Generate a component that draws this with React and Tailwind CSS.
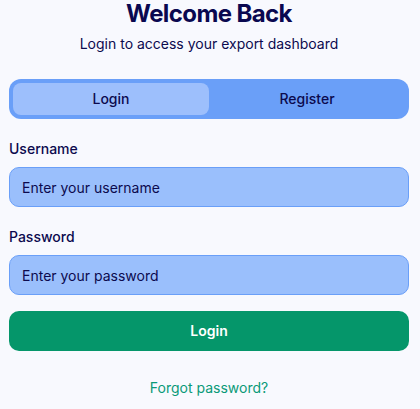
import React, { useState } from 'react';

const App = () => {
  const [tab, setTab] = useState('login');

  return (
    <div className="min-h-screen bg-[#f8f9fe] pl-[9px] pr-[11px] font-['Inter',sans-serif] text-[#0c0a4e]">
      <div className="text-center">
        <h1 className="text-2xl font-bold leading-7 tracking-tight text-[#0a0850]">Welcome Back</h1>
        <p className="mt-[6px] text-sm leading-5">Login to access your export dashboard</p>
      </div>

      {/* Login / Register switch */}
      <div className="mt-[25px] flex rounded-xl bg-[#6a9ff8] p-1">
        <button
          onClick={() => setTab('login')}
          className={`h-8 flex-1 rounded-lg text-sm font-medium ${tab === 'login' ? 'bg-[#9dbffc]' : ''}`}
        >
          Login
        </button>
        <button
          onClick={() => setTab('register')}
          className={`h-8 flex-1 rounded-lg text-sm font-medium ${tab === 'register' ? 'bg-[#9dbffc]' : ''}`}
        >
          Register
        </button>
      </div>

      <form className="mt-5" onSubmit={e => e.preventDefault()}>
        <label className="block text-sm font-medium leading-5">Username</label>
        <input
          type="text"
          placeholder="Enter your username"
          className="mt-2 block h-10 w-full rounded-[10px] border border-[#6a9ff8] bg-[#9abffc] px-3 text-sm outline-none placeholder:text-[#0c0a4e]"
        />

        <label className="mt-5 block text-sm font-medium leading-5">Password</label>
        <input
          type="password"
          placeholder="Enter your password"
          className="mt-2 block h-10 w-full rounded-[10px] border border-[#6a9ff8] bg-[#9abffc] px-3 text-sm outline-none placeholder:text-[#0c0a4e]"
        />

        <button
          type="submit"
          className="mt-4 block h-10 w-full rounded-[10px] bg-[#05966a] text-sm font-semibold text-white"
        >
          Login
        </button>
      </form>

      <div className="mt-6 text-center">
        <a href="#" className="text-sm leading-5 text-[#0a9a78]">Forgot password?</a>
      </div>
    </div>
  );
};

export default App;
